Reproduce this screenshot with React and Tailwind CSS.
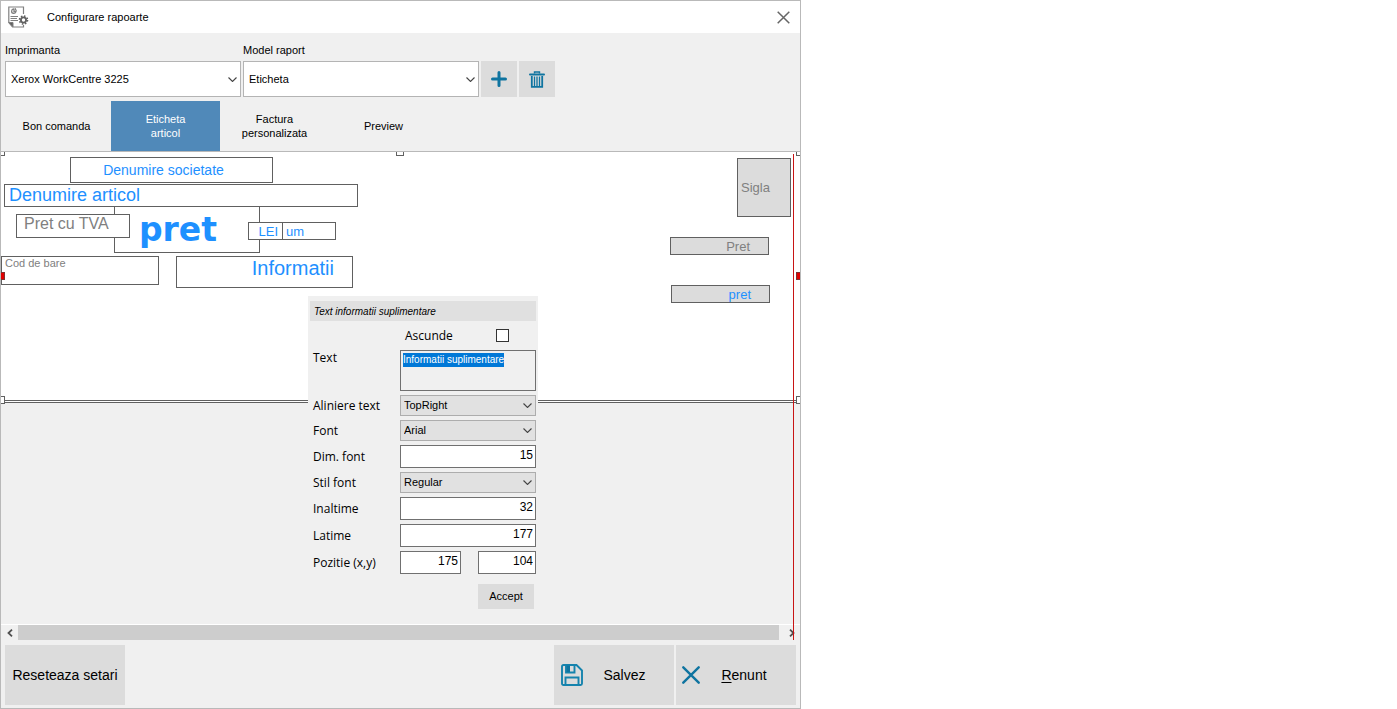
import { useEffect, useRef, useState } from 'react';

const TABS = ['Bon comanda', 'Eticheta articol', 'Factura personalizata', 'Preview'];

const LABEL_ITEMS = [
  { id: 'pret', text: 'pret', className: 'left-[113px] top-[54px] w-[146px] h-[47px] bg-white justify-center pr-[18px] font-[DejaVu_Sans] font-bold text-[33px] text-[#1e90ff]' },
  { id: 'societate', text: 'Denumire societate', className: 'left-[69px] top-[5px] w-[203px] h-[26px] bg-white justify-center pr-4 text-[14px] text-[#1e90ff]' },
  { id: 'articol', text: 'Denumire articol', className: 'left-[3px] top-[32px] w-[354px] h-[23px] bg-white pl-1 pb-0.5 text-[18px] text-[#1e90ff]' },
  { id: 'tva', text: 'Pret cu TVA', className: 'left-[15px] top-[62px] w-[114px] h-[24px] bg-white pl-[7px] pb-1 text-[16px] text-[#808080]' },
  { id: 'lei', text: 'LEI', className: 'left-[247px] top-[70px] w-[35px] h-[18px] bg-white justify-end pr-1 text-[13px] text-[#1e90ff]' },
  { id: 'um', text: 'um', className: 'left-[281px] top-[70px] w-[54px] h-[18px] bg-white pl-[3px] text-[13px] text-[#1e90ff]' },
  { id: 'cod', text: 'Cod de bare', className: 'left-0 top-[104px] w-[158px] h-[29px] bg-white pl-[3px] pb-3.5 text-[11px] text-[#808080]' },
  { id: 'info', text: 'Informatii', className: 'left-[175px] top-[104px] w-[177px] h-[32px] bg-white justify-end pr-[18px] pb-2 text-[20px] text-[#1e90ff]' },
  { id: 'sigla', text: 'Sigla', className: 'left-[736px] top-[6px] w-[54px] h-[59px] bg-[#dcdcdc] pl-[3px] text-[13px] text-[#808080]' },
  { id: 'pret2', text: 'Pret', className: 'left-[669px] top-[85px] w-[99px] h-[18px] bg-[#dcdcdc] justify-end pr-[18px] text-[13px] text-[#808080]' },
  { id: 'pret3', text: 'pret', className: 'left-[670px] top-[133px] w-[99px] h-[18px] bg-[#dcdcdc] justify-end pr-[18px] text-[13px] text-[#1e90ff]' },
];

const HANDLES = [
  'left-0 top-0 w-1 h-1 bg-white border-r border-b border-[#606060]',
  'left-[395px] top-0 w-2 h-1 bg-white border-x border-b border-[#606060]',
  'right-0 top-0 w-1 h-1 bg-white border-l border-b border-[#606060]',
  'left-0 top-[120px] w-1 h-2 bg-[#e00000] border-r border-y border-[#803030]',
  'right-0 top-[120px] w-1 h-2 bg-[#e00000] border-l border-y border-[#803030]',
  'left-0 top-[244px] w-1 h-2 bg-white border-r border-y border-[#606060]',
  'right-0 top-[244px] w-1 h-2 bg-white border-l border-y border-[#606060]',
];

const Chevron = ({ className }) => (
  <svg viewBox="0 0 9 5" fill="none" stroke="#444" strokeWidth="1.1" className={className}>
    <path d="M0.5 0.5 4.5 4.5 8.5 0.5" />
  </svg>
);

const ReportIcon = () => (
  <svg width="22" height="22" viewBox="0 0 22 22" fill="none" stroke="#808080">
    <path d="M15.5 8V1H0.8V16.5L4.5 21H15.5V19" strokeWidth="1.2" />
    <path d="M0.8 16.5H5V21Z" fill="#606060" />
    <path d="M6 3A2.2 2.2 0 1 0 8 5.5H6Z" strokeWidth="1.3" />
    <path d="M7.5 2.2V4.2H9" />
    <path d="M2.5 10.5H10M2.5 12.5H9M2.5 14.5H10" />
    <circle cx="15.5" cy="14" r="2.6" strokeWidth="1.8" stroke="#606060" />
    <circle cx="15.5" cy="14" r="4" strokeWidth="1.6" strokeDasharray="1.55 1.59" stroke="#606060" />
  </svg>
);

const PlusIcon = () => (
  <svg width="16" height="16" viewBox="0 0 16 16" stroke="#0f74a0" strokeWidth="3" strokeLinecap="round">
    <path d="M8 1.5V14.5M1.5 8H14.5" />
  </svg>
);

const TrashIcon = () => (
  <svg width="16" height="17" viewBox="0 0 16 17" fill="none" stroke="#0f74a0">
    <path d="M1 3.5H15" strokeWidth="2" strokeLinecap="round" />
    <path d="M5.5 2.5V1H10.5V2.5" strokeWidth="1.4" />
    <path d="M2.8 5V15.8H13.2V5" strokeWidth="1.8" />
    <path d="M5.5 5.5V15M8 5.5V15M10.5 5.5V15" strokeWidth="1.3" />
  </svg>
);

const SaveIcon = () => (
  <svg width="22" height="22" viewBox="0 0 22 22" fill="none" stroke="#1583ad" strokeWidth="1.9">
    <path d="M1 2.5Q1 1 2.5 1H15.5L21 6.5V19.5Q21 21 19.5 21H2.5Q1 21 1 19.5Z" />
    <path d="M5 1V8.5H13.5V1" />
    <path d="M5.5 1.5H9V8H5.5Z" fill="#0f74a0" stroke="none" />
    <path d="M4.5 20.5V13.5H17.5V20.5" />
  </svg>
);

const CancelIcon = () => (
  <svg width="18" height="18" viewBox="0 0 18 18" stroke="#0f74a0" strokeWidth="2.4" strokeLinecap="round">
    <path d="M1.3 1.3 16.7 16.7M16.7 1.3 1.3 16.7" />
  </svg>
);

function TopSelect({ id, label, options }) {
  return (
    <div className="flex w-[236px] min-w-0 flex-col gap-[3px]">
      <label htmlFor={id} className="leading-4">{label}</label>
      <div className="grid h-9 items-center">
        <select id={id} className="col-start-1 row-start-1 h-9 w-full appearance-none border border-[#b4b4b4] bg-white pl-[5px] outline-none">
          {options.map((o) => <option key={o}>{o}</option>)}
        </select>
        <Chevron className="pointer-events-none col-start-1 row-start-1 mr-1 h-[5px] w-[9px] justify-self-end" />
      </div>
    </div>
  );
}

function SelectRow({ id, label, options }) {
  return (
    <div className="grid h-[21px] grid-cols-[87px_136px] items-center">
      <label htmlFor={id} className="font-['Open_Sans'] text-[12px]">{label}</label>
      <div className="grid items-center">
        <select id={id} className="col-start-1 row-start-1 h-[21px] w-full appearance-none border border-[#adadad] bg-[#e1e1e1] pl-[3px] outline-none">
          {options.map((o) => <option key={o}>{o}</option>)}
        </select>
        <Chevron className="pointer-events-none col-start-1 row-start-1 mr-1 h-[5px] w-[9px] justify-self-end" />
      </div>
    </div>
  );
}

function NumberInput({ id, value, className, ariaLabel }) {
  return (
    <input
      id={id}
      type="text"
      inputMode="numeric"
      defaultValue={value}
      aria-label={ariaLabel}
      className={`h-[23px] border border-[#707070] bg-white pr-0.5 pb-[3px] text-right text-[12px] outline-none ${className}`}
    />
  );
}

function NumberRow({ id, label, value }) {
  return (
    <div className="grid h-[23px] grid-cols-[87px_136px] items-center">
      <label htmlFor={id} className="font-['Open_Sans'] text-[12px]">{label}</label>
      <NumberInput id={id} value={value} className="w-full" />
    </div>
  );
}

function PropertiesPanel() {
  const textRef = useRef(null);

  useEffect(() => {
    textRef.current?.focus();
    textRef.current?.select();
  }, []);

  return (
    <form
      onSubmit={(e) => e.preventDefault()}
      className="absolute left-[307px] top-[144px] flex w-[230px] flex-col gap-1 bg-[#f0f0f0] pt-[5px] pr-0.5 pb-2 pl-[5px]"
    >
      <h2 className="-ml-[3px] h-5 bg-[#e0e0e0] pl-1 text-[10px] leading-[22px] italic">Text informatii suplimentare</h2>
      <div className="flex h-[21px] items-center pl-[92px]">
        <label htmlFor="ascunde" className="w-[91px] font-['Open_Sans'] text-[12px]">Ascunde</label>
        <input id="ascunde" type="checkbox" className="h-[13px] w-[13px] appearance-none border border-[#333] bg-white checked:bg-[#0078d7]" />
      </div>
      <div className="grid grid-cols-[87px_136px]">
        <label htmlFor="text" className="font-['Open_Sans'] text-[12px] leading-4">Text</label>
        <textarea
          id="text"
          ref={textRef}
          spellCheck={false}
          defaultValue="Informatii suplimentare"
          className="h-[41px] w-full resize-none border border-[#707070] bg-[#f0f0f0] px-0.5 py-0.5 text-[10px] leading-[14px] outline-none selection:bg-[#0078d7] selection:text-white"
        />
      </div>
      <SelectRow id="aliniere" label="Aliniere text" options={['TopRight', 'TopLeft', 'TopCenter']} />
      <SelectRow id="font" label="Font" options={['Arial', 'Arial Black']} />
      <NumberRow id="dim" label="Dim. font" value="15" />
      <SelectRow id="stil" label="Stil font" options={['Regular', 'Bold', 'Italic']} />
      <NumberRow id="inaltime" label="Inaltime" value="32" />
      <NumberRow id="latime" label="Latime" value="177" />
      <div className="grid h-[23px] grid-cols-[87px_136px] items-center">
        <label htmlFor="pozx" className="font-['Open_Sans'] text-[12px]">Pozitie (x,y)</label>
        <div className="flex justify-between">
          <NumberInput id="pozx" value="175" className="w-[61px]" />
          <NumberInput id="pozy" value="104" ariaLabel="Pozitie y" className="w-[58px]" />
        </div>
      </div>
      <button type="submit" className="mt-1.5 mr-0.5 h-[25px] w-14 self-end bg-[#dcdcdc]">Accept</button>
    </form>
  );
}

export default function App() {
  const [activeTab, setActiveTab] = useState('Eticheta articol');

  return (
    <div className="min-h-screen bg-white">
      <div className="flex min-h-screen w-full max-w-[801px] flex-col border border-[#b9b9b9] bg-[#f0f0f0] font-['Liberation_Sans',Arial,sans-serif] text-[11px] text-black">
        <header className="flex h-8 items-center bg-white pr-2.5 pl-[7px]">
          <ReportIcon />
          <h1 className="ml-[17px] flex-1">Configurare rapoarte</h1>
          <button aria-label="Inchide">
            <svg width="13" height="13" viewBox="0 0 13 13" stroke="#666" strokeWidth="1.5">
              <path d="M0.7 0.7 12.3 12.3M12.3 0.7 0.7 12.3" />
            </svg>
          </button>
        </header>

        <div className="flex items-end gap-0.5 px-1 pt-[9px]">
          <TopSelect id="imprimanta" label="Imprimanta" options={['Xerox WorkCentre 3225']} />
          <TopSelect id="model" label="Model raport" options={['Eticheta', 'Bon comanda']} />
          <button aria-label="Adauga" className="flex h-9 w-9 items-center justify-center bg-[#dcdcdc]"><PlusIcon /></button>
          <button aria-label="Sterge" className="flex h-9 w-9 items-center justify-center bg-[#dcdcdc]"><TrashIcon /></button>
        </div>

        <nav className="mt-1 flex border-b border-[#b9b9b9] pl-px">
          {TABS.map((tab) => (
            <button
              key={tab}
              onClick={() => setActiveTab(tab)}
              className={`h-[50px] w-[109px] px-5 leading-[14px] ${activeTab === tab ? 'bg-[#5089b9] text-white' : ''}`}
            >
              {tab}
            </button>
          ))}
        </nav>

        <main className="relative flex flex-1 flex-col">
          <div className="min-h-[472px] flex-1">
            {/* printable label area */}
            <div className="h-[251px] border-b-3 border-double border-[#606060] bg-white">
              {LABEL_ITEMS.map((item) => (
                <div key={item.id} className={`absolute flex items-center border border-[#606060] leading-none whitespace-nowrap ${item.className}`}>
                  {item.text}
                </div>
              ))}
              {HANDLES.map((h) => <span key={h} className={`absolute ${h}`} />)}
            </div>
          </div>

          <div className="flex h-4 items-center border-t border-white">
            <button aria-label="Stanga" className="flex h-[15px] w-[17px] items-center justify-center">
              <svg width="6" height="8" viewBox="0 0 6 8" fill="none" stroke="#505050" strokeWidth="1.8"><path d="M5 0.7 1.5 4 5 7.3" /></svg>
            </button>
            <div className="h-[15px] flex-1 bg-[#cdcdcd]" />
            <button aria-label="Dreapta" className="flex h-[15px] w-[21px] items-center justify-center pl-1">
              <svg width="6" height="8" viewBox="0 0 6 8" fill="none" stroke="#505050" strokeWidth="1.8"><path d="M1 0.7 4.5 4 1 7.3" /></svg>
            </button>
          </div>

          {/* right margin guide */}
          <div className="absolute top-0.5 right-1.5 bottom-0 w-px bg-[#c81414]" />
          <PropertiesPanel />
        </main>

        <footer className="flex gap-0.5 px-1 pt-[5px] pb-[3px] text-[14px]">
          <button className="h-[60px] w-[120px] bg-[#dcdcdc]">Reseteaza setari</button>
          <button className="ml-auto flex h-[60px] w-[120px] items-center bg-[#dcdcdc] pl-[7px]">
            <SaveIcon />
            <span className="flex-1 pr-2">Salvez</span>
          </button>
          <button className="flex h-[60px] w-[120px] items-center bg-[#dcdcdc] pl-1.5">
            <CancelIcon />
            <span className="flex-1 pr-2"><span className="underline underline-offset-2">R</span>enunt</span>
          </button>
        </footer>
      </div>
    </div>
  );
}
